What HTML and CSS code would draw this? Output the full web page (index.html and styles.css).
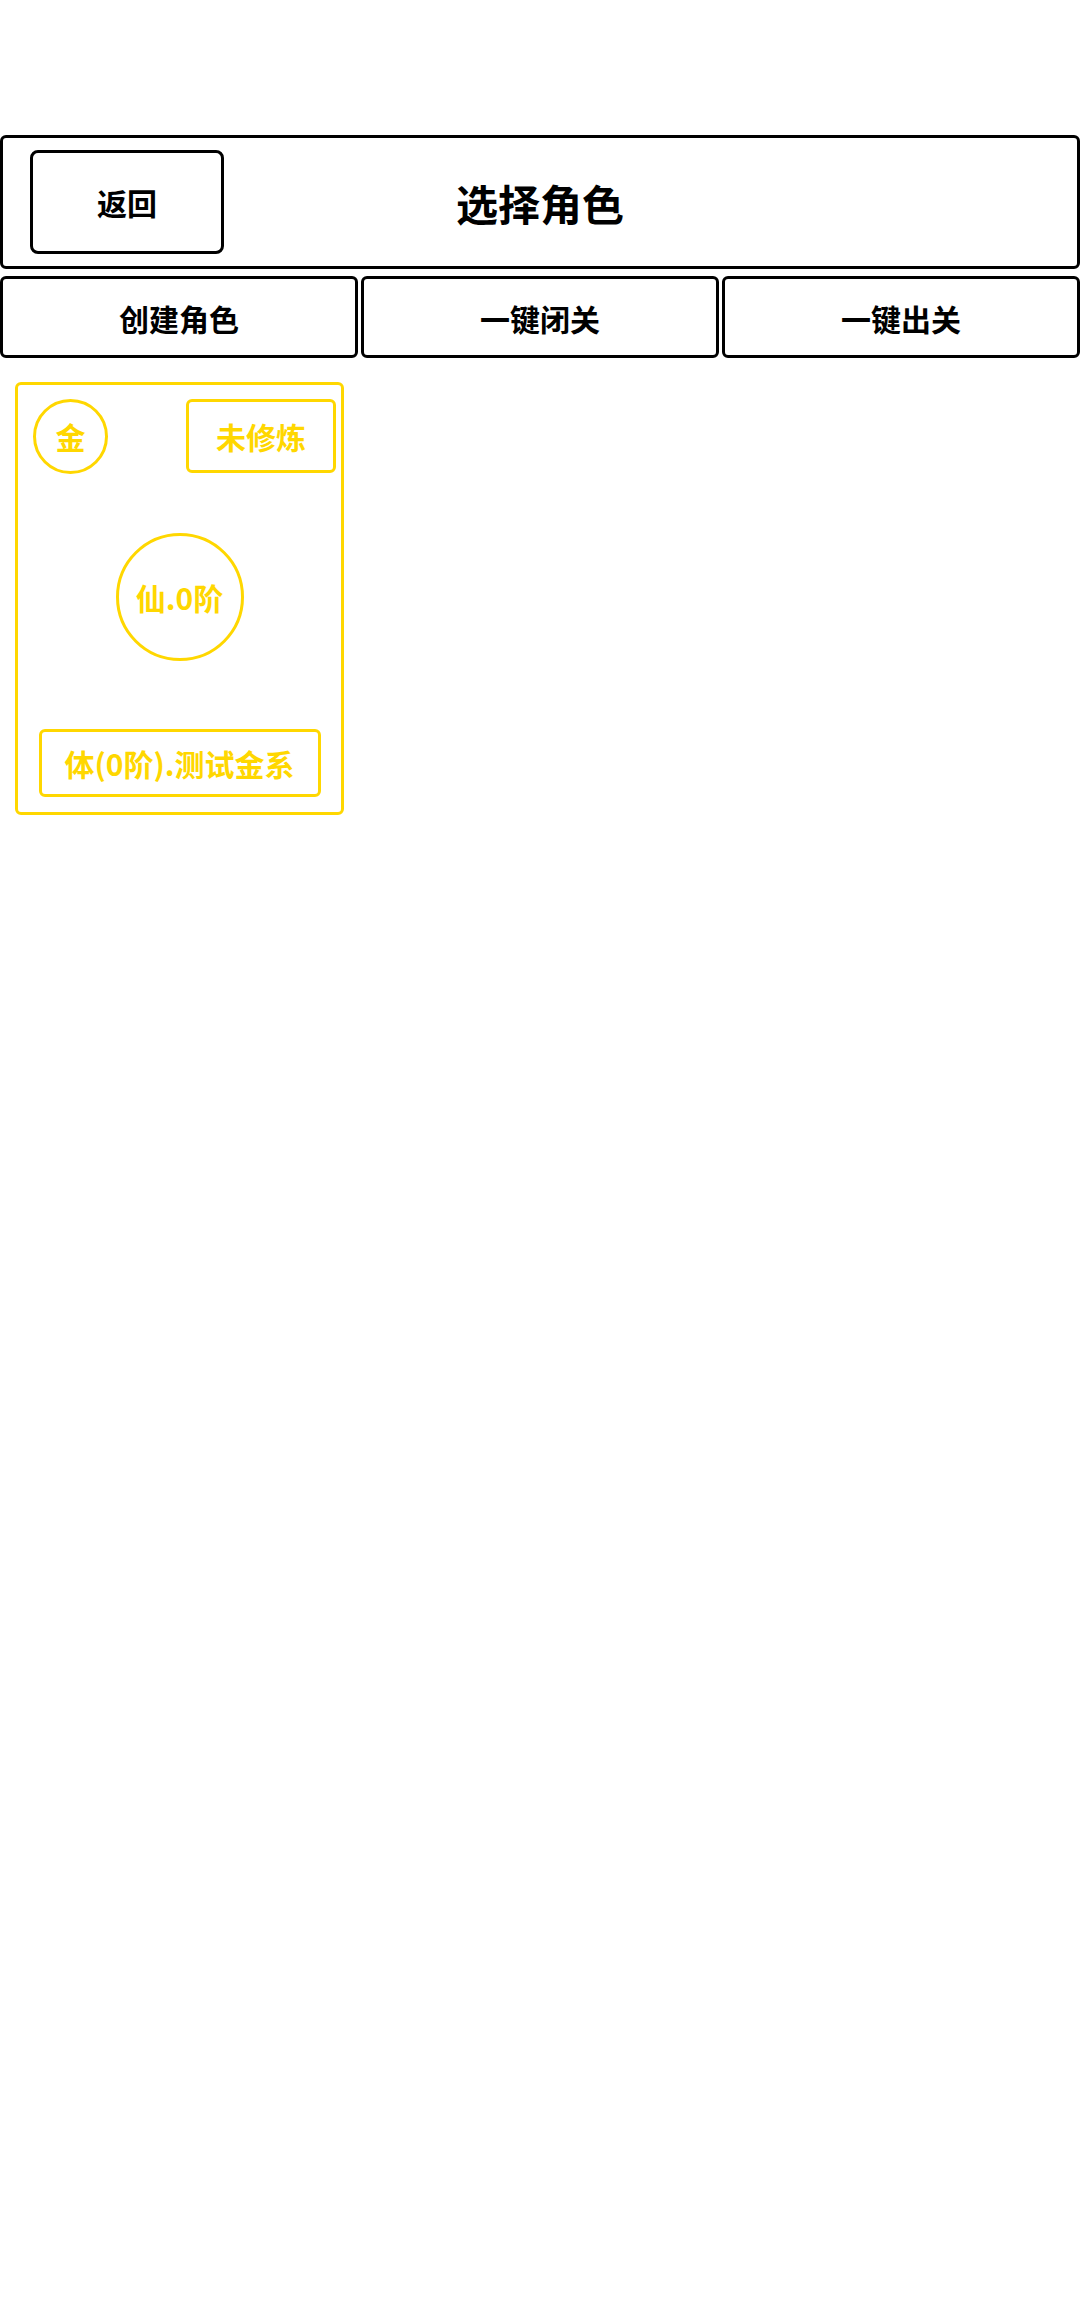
FILE: index.html
```html
<!DOCTYPE html>
<html lang="zh-CN">
<head>
<meta charset="utf-8">
<title>选择角色</title>
<link rel="stylesheet" href="styles.css">
</head>
<body>
<div class="status"></div>
<header class="topbar">
  <button class="back">返回</button>
  <h1 class="title">选择角色</h1>
  <span class="spacer"></span>
</header>
<nav class="actions">
  <button class="action">创建角色</button>
  <button class="action">一键闭关</button>
  <button class="action">一键出关</button>
</nav>
<section class="roles">
  <div class="card">
    <div class="card-top">
      <div class="element">金</div>
      <div class="state">未修炼</div>
    </div>
    <div class="realm">仙.0阶</div>
    <div class="name">体(0阶).测试金系</div>
  </div>
</section>
</body>
</html>
```
FILE: styles.css
```css
* {
  box-sizing: border-box;
}

html, body {
  margin: 0;
  padding: 0;
  background: #fff;
  width: 1080px;
  height: 2310px;
}

body {
  font-family: "Noto Sans CJK SC", "Noto Sans", sans-serif;
  font-weight: 700;
  color: #000;
}

.status {
  height: 135px;
}

.topbar {
  height: 134px;
  border: 3px solid #000;
  border-radius: 6px;
  display: grid;
  grid-template-columns: 1fr auto 1fr;
  align-items: center;
}

.back {
  justify-self: start;
  margin-left: 27px;
  width: 194px;
  height: 104px;
  border: 3px solid #000;
  border-radius: 8px;
  background: #fff;
  font-family: inherit;
  font-weight: 700;
  font-size: 30px;
  line-height: 1;
  color: #000;
  padding: 0;
}

.title {
  margin: 0;
  font-size: 42px;
  line-height: 1;
  font-weight: 700;
  padding-top: 2px;
}

.actions {
  margin-top: 7px;
  display: grid;
  grid-template-columns: 1fr 1fr 1fr;
  gap: 3px;
}

.action {
  height: 82px;
  border: 3px solid #000;
  border-radius: 6px;
  background: #fff;
  font-family: inherit;
  font-weight: 700;
  font-size: 30px;
  line-height: 1;
  color: #000;
  padding: 2px 0 0;
}

.roles {
  padding: 24px 0 0 15px;
  display: flex;
  flex-wrap: wrap;
}

.card {
  width: 329px;
  height: 433px;
  border: 3px solid #FFD700;
  border-radius: 6px;
  padding: 14px 0 15px;
  display: flex;
  flex-direction: column;
  align-items: center;
  color: #FFD700;
}

.card-top {
  width: 100%;
  height: 74px;
  padding: 0 5px 0 15px;
  display: flex;
  justify-content: space-between;
  align-items: center;
}

.element {
  width: 75px;
  height: 75px;
  border: 3px solid #FFD700;
  border-radius: 50%;
  display: flex;
  align-items: center;
  justify-content: center;
  font-size: 30px;
  line-height: 1;
}

.state {
  width: 150px;
  height: 74px;
  border: 3px solid #FFD700;
  border-radius: 6px;
  display: flex;
  align-items: center;
  justify-content: center;
  font-size: 30px;
  line-height: 1;
}

.realm {
  margin-top: 60px;
  width: 128px;
  height: 128px;
  border: 3px solid #FFD700;
  border-radius: 50%;
  display: flex;
  align-items: center;
  justify-content: center;
  font-size: 30px;
  line-height: 1;
}

.name {
  margin-top: 68px;
  width: 282px;
  height: 68px;
  border: 3px solid #FFD700;
  border-radius: 6px;
  display: flex;
  align-items: center;
  justify-content: center;
  font-size: 30px;
  line-height: 1;
}
```
